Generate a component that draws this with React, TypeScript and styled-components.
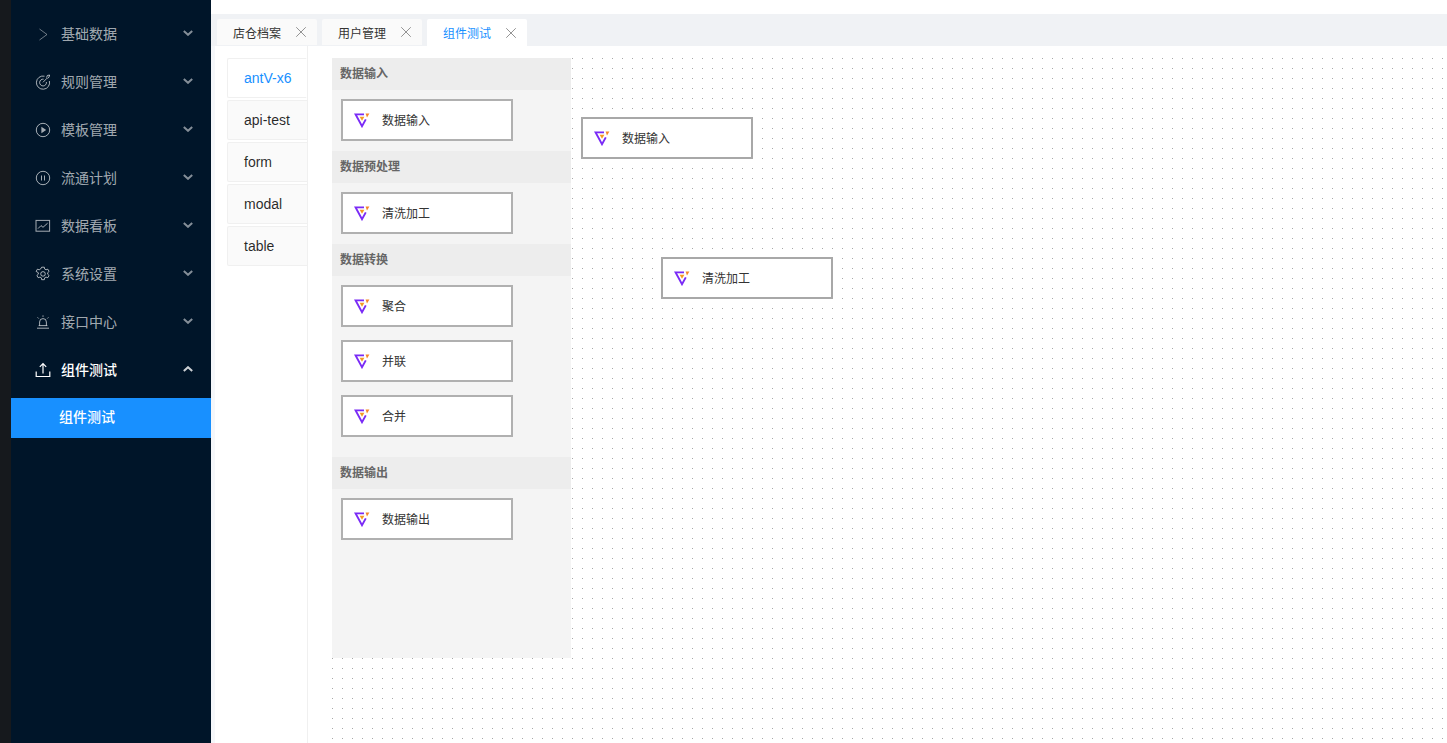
import { ReactNode } from "react";
import styled, { createGlobalStyle } from "styled-components";
import { LuX } from "react-icons/lu";

const GlobalStyle = createGlobalStyle`
  html, body {
    margin: 0;
    padding: 0;
    height: 100%;
    overflow: hidden;
  }
  body {
    font-family: "Liberation Sans", Arial, "Noto Sans CJK SC", sans-serif;
    font-size: 14px;
    background: #fff;
  }
`;

const stroke = { fill: "none", stroke: "currentColor", strokeWidth: 1 };

const menuIcons: Record<string, ReactNode> = {
  right: <path {...stroke} opacity={0.65} d="M4.5 3 12 8.5 4.5 14" />,
  target: (
    <>
      <path {...stroke} d="M9.5 2.2A6.6 6.6 0 1 0 14.4 7" />
      <path {...stroke} d="M8.6 5.2A3.4 3.4 0 1 0 11.4 8" />
      <path {...stroke} d="M8 8.3 12 4.2M11.6 3.6 12.3 1.5 14.6 1 14 3.2 12.4 4.4" />
    </>
  ),
  play: (
    <>
      <circle {...stroke} cx="8" cy="8" r="6.7" />
      <path fill="currentColor" d="M6.4 4.8 11.2 8l-4.8 3.2z" />
    </>
  ),
  pause: (
    <>
      <circle {...stroke} cx="8" cy="8" r="6.7" />
      <path {...stroke} d="M6.5 5.5v5M9.5 5.5v5" />
    </>
  ),
  chart: (
    <>
      <rect {...stroke} x="1" y="2.4" width="13.6" height="10.8" />
      <path {...stroke} d="M3 10.6 6 7.6 8 9.3 12.6 5.2" />
    </>
  ),
  gear: (
    <>
      <path
        {...stroke}
        d="M6.7 1.2h2.6l.4 1.9 1.3.7 1.8-.6 1.3 2.2-1.4 1.3v1.5l1.4 1.3-1.3 2.2-1.8-.6-1.3.7-.4 1.9H6.7l-.4-1.9-1.3-.7-1.8.6-1.3-2.2 1.4-1.3V6.7L1.1 5.4l1.3-2.2 1.8.6 1.3-.7z"
      />
      <circle {...stroke} cx="8" cy="7.9" r="2.3" />
    </>
  ),
  alert: (
    <>
      <path {...stroke} d="M2 14.2h12M3.6 11.6h8.8M4.6 11.6V8a3.4 3.4 0 0 1 6.8 0v3.6" />
      <path {...stroke} d="M8 1.4v1.4M2.6 3.4l1.1 1.1M13.4 3.4l-1.1 1.1" />
    </>
  ),
  upload: <path {...stroke} strokeWidth={1.2} d="M1.2 9.6v4.9h13.6V9.6M8 11.4V2M4.8 4.8 8 1.6l3.2 3.2" />,
};

const menus = [
  { label: "基础数据", icon: "right" },
  { label: "规则管理", icon: "target" },
  { label: "模板管理", icon: "play" },
  { label: "流通计划", icon: "pause" },
  { label: "数据看板", icon: "chart" },
  { label: "系统设置", icon: "gear" },
  { label: "接口中心", icon: "alert" },
  { label: "组件测试", icon: "upload", open: true },
];

const pageTabs = [
  { label: "店仓档案" },
  { label: "用户管理" },
  { label: "组件测试", active: true },
];

const sideTabs = ["antV-x6", "api-test", "form", "modal", "table"];

const groups = [
  { title: "数据输入", items: ["数据输入"], tail: 10 },
  { title: "数据预处理", items: ["清洗加工"], tail: 10 },
  { title: "数据转换", items: ["聚合", "并联", "合并"], tail: 20 },
  { title: "数据输出", items: ["数据输出"], tail: 0 },
];

const Logo = () => (
  <LogoSvg viewBox="0 0 16 16">
    <path fill="none" stroke="#7a2bf6" strokeWidth="1.9" d="M10 2.4H1.6L8 14.2l3.8-6.8" />
    <path fill="#f59a23" d="M5.6 4.8h4.8L8 8.8z" />
    <path fill="#f5872b" d="M11.6 1.4h3.8L13 5.6z" />
  </LogoSvg>
);

const Arrow = ({ up }: { up?: boolean }) => (
  <ArrowSvg viewBox="0 0 10 6">
    <path fill="none" stroke="currentColor" strokeWidth="2" d={up ? "M.8 5 5 1.2 9.2 5" : "M.8 1 5 4.8 9.2 1"} />
  </ArrowSvg>
);

const App = () => {
  return (
    <Page>
      <GlobalStyle />
      <Strip />
      <Sidebar>
        {menus.map((m) => (
          <MenuRow key={m.label} $open={m.open}>
            <MenuIcon viewBox="0 0 16 16">{menuIcons[m.icon]}</MenuIcon>
            <MenuLabel>{m.label}</MenuLabel>
            <Arrow up={m.open} />
          </MenuRow>
        ))}
        <SubItem>组件测试</SubItem>
      </Sidebar>
      <Main>
        <TopBar />
        <TabBar>
          {pageTabs.map((t) => (
            <PageTab key={t.label} $active={t.active}>
              <span>{t.label}</span>
              <LuX size={18} strokeWidth={1.2} />
            </PageTab>
          ))}
        </TabBar>
        <Content>
          <SideTabs>
            {sideTabs.map((t, i) => (
              <SideTab key={t} $active={i === 0}>
                {t}
              </SideTab>
            ))}
          </SideTabs>
          <Graph>
            <Palette>
              {groups.map((g) => (
                <section key={g.title}>
                  <GroupTitle>{g.title}</GroupTitle>
                  <GroupBody $tail={g.tail}>
                    {g.items.map((item) => (
                      <Node key={item}>
                        <Logo />
                        <span>{item}</span>
                      </Node>
                    ))}
                  </GroupBody>
                </section>
              ))}
            </Palette>
            <CanvasNode $left={249} $top={59}>
              <Logo />
              <span>数据输入</span>
            </CanvasNode>
            <CanvasNode $left={329} $top={199}>
              <Logo />
              <span>清洗加工</span>
            </CanvasNode>
          </Graph>
        </Content>
      </Main>
    </Page>
  );
};

export default App;

const Page = styled.div`
  display: flex;
  width: 1447px;
  height: 743px;
  overflow: hidden;
`;

const Strip = styled.div`
  width: 11px;
  flex: none;
  background: #16191d;
`;

const Sidebar = styled.nav`
  width: 200px;
  flex: none;
  padding-top: 14px;
  box-sizing: border-box;
  background: #001529;
`;

const MenuRow = styled.div<{ $open?: boolean }>`
  display: flex;
  align-items: center;
  height: 40px;
  margin-bottom: 8px;
  padding: 0 18px 0 24px;
  color: ${(p) => (p.$open ? "#fff" : "rgba(255, 255, 255, 0.65)")};
  font-weight: ${(p) => (p.$open ? 500 : 400)};

  &:last-of-type {
    margin-bottom: 4px;
  }
`;

const MenuIcon = styled.svg`
  width: 16px;
  height: 16px;
  flex: none;
  margin-right: 10px;
`;

const MenuLabel = styled.span`
  flex: 1;
  line-height: 39px;
`;

const ArrowSvg = styled.svg`
  width: 10px;
  height: 6px;
  flex: none;
  margin-top: -3px;
  opacity: 0.8;
`;

const SubItem = styled.div`
  height: 40px;
  padding-left: 48px;
  line-height: 39px;
  color: #fff;
  font-weight: 500;
  background: #1890ff;
`;

const Main = styled.main`
  flex: 1;
  display: flex;
  flex-direction: column;
  min-width: 0;
  background: #f5f7fa;
`;

const TopBar = styled.div`
  height: 14px;
  flex: none;
  background: #fff;
`;

const TabBar = styled.div`
  display: flex;
  flex: none;
  gap: 5px;
  height: 32px;
  padding: 5px 0 0 6px;
  box-sizing: border-box;
  background: #f0f2f5;
`;

const PageTab = styled.div<{ $active?: boolean }>`
  display: flex;
  align-items: center;
  justify-content: space-between;
  width: 100px;
  height: ${(p) => (p.$active ? 27 : 26)}px;
  padding: 0 7px 0 16px;
  box-sizing: border-box;
  font-size: 12px;
  border-radius: 2px 2px 0 0;
  background: ${(p) => (p.$active ? "#fff" : "#fafafa")};
  color: ${(p) => (p.$active ? "#1890ff" : "#333")};

  svg {
    color: #888;
  }
`;

const Content = styled.div`
  flex: 1;
  display: flex;
  margin-left: 4px;
  padding: 12px 0 0 12px;
  min-height: 0;
  background: #fff;
`;

const SideTabs = styled.div`
  display: flex;
  flex-direction: column;
  gap: 2px;
  width: 81px;
  flex: none;
  border-right: 1px solid #f0f0f0;
  box-sizing: border-box;
  margin-top: -12px;
  padding-top: 12px;
`;

const SideTab = styled.div<{ $active?: boolean }>`
  height: 40px;
  box-sizing: border-box;
  padding-left: 16px;
  line-height: 38px;
  font-size: 14px;
  border: 1px solid #f0f0f0;
  border-right: ${(p) => (p.$active ? "1px solid #fff" : "none")};
  border-radius: 2px 0 0 2px;
  background: ${(p) => (p.$active ? "#fff" : "#fafafa")};
  color: ${(p) => (p.$active ? "#1890ff" : "rgba(0, 0, 0, 0.85)")};
`;

const Graph = styled.div`
  position: relative;
  flex: 1;
  margin-left: 24px;
  background-color: #fff;
  background-image: radial-gradient(circle at 0.5px 0.5px, #a8a8a8 0.5px, transparent 0.7px);
  background-size: 10px 10px;
`;

const Palette = styled.aside`
  width: 239px;
  height: 600px;
  background: #f4f4f4;
`;

const GroupTitle = styled.h4`
  margin: 0;
  height: 32px;
  padding-left: 8px;
  line-height: 33px;
  font-size: 12px;
  font-weight: 700;
  color: #666;
  background: #ededed;
`;

const GroupBody = styled.div<{ $tail: number }>`
  display: flex;
  flex-direction: column;
  gap: 13px;
  padding: 9px 0 ${(p) => p.$tail}px 9px;
`;

const LogoSvg = styled.svg`
  width: 16px;
  height: 16px;
  flex: none;
  margin-right: 12px;
`;

const Node = styled.div`
  display: flex;
  align-items: center;
  width: 172px;
  height: 42px;
  padding-left: 11px;
  box-sizing: border-box;
  font-size: 12px;
  color: #333;
  background: #fff;
  border: 2px solid #b0b0b0;

  span {
    margin-top: -2px;
  }
`;

const CanvasNode = styled(Node)<{ $left: number; $top: number }>`
  position: absolute;
  left: ${(p) => p.$left}px;
  top: ${(p) => p.$top}px;
  border-color: #a8a8a8;
`;
